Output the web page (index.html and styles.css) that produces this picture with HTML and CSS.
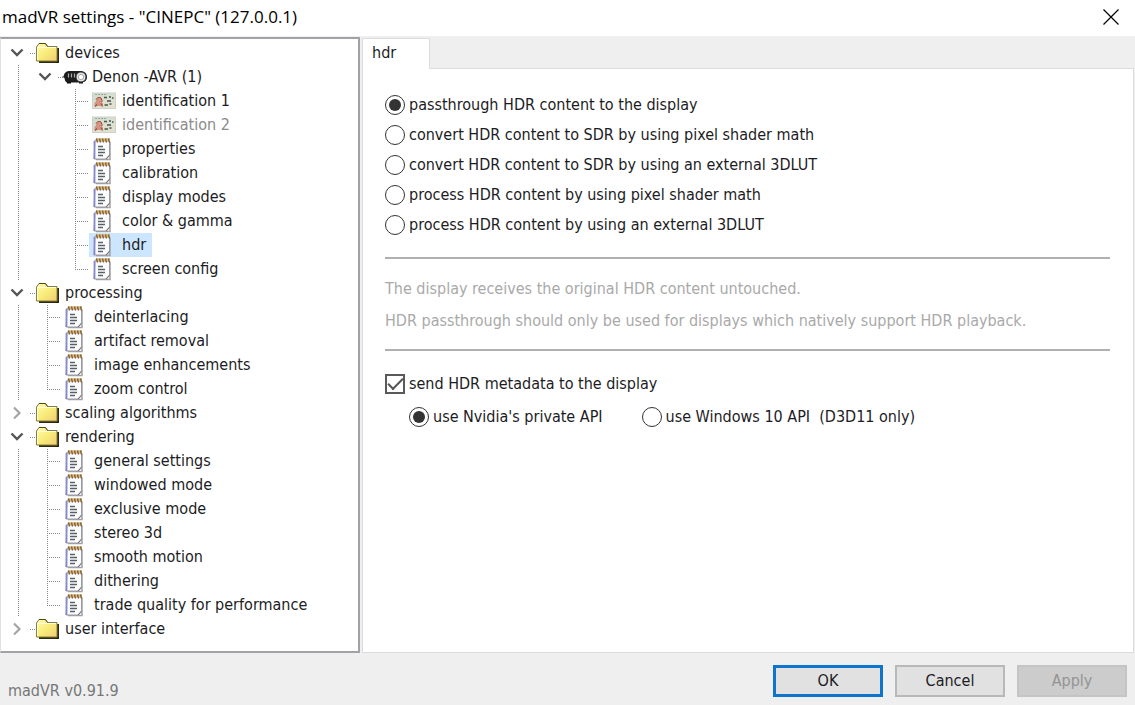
FILE: index.html
```html
<!DOCTYPE html>
<html lang="en">
<head>
<meta charset="utf-8">
<title>madVR settings</title>
<link rel="stylesheet" href="styles.css">
</head>
<body>
<svg class="sprite" aria-hidden="true">
  <defs>
    <linearGradient id="fold" x1="0" y1="0" x2="1" y2="1">
      <stop offset="0" stop-color="#fffbb0"/><stop offset=".5" stop-color="#f8ec7a"/><stop offset="1" stop-color="#f3cd74"/>
    </linearGradient>
    <linearGradient id="card" x1="0" y1="0" x2="1" y2="1">
      <stop offset="0" stop-color="#cfdcd0"/><stop offset="1" stop-color="#e3e2cf"/>
    </linearGradient>
  </defs>
  <symbol id="folder" viewBox="-1 -1 24 22">
    <path d="M3 19h19V5" fill="none" stroke="#2a2910" stroke-width="2"/>
    <path d="M.5 18V4L3 .5h6.500l2 3h9.500V18z" fill="url(#fold)" stroke="#85803a"/>
    <path d="M3 .5h6.500l2 3" fill="none" stroke="#4c4a1c"/>
    <path d="M1.500 17V4.500h18.500" fill="none" stroke="#fffde0"/>
  </symbol>
  <symbol id="page" viewBox="1 0 24 24">
    <path d="M5 22.500h14V4.500" fill="none" stroke="#a2a2a2" stroke-width="1.500"/>
    <path d="M4 3h14.500v15.500l-3 3.500H3z" fill="#fcfcfe" stroke="#9a9aa4"/>
    <path d="M3.500 4v18" stroke="#8488cc" stroke-width="1.800"/>
    <path d="M15 22l3.500-4" stroke="#666"/>
    <path d="M5 3h14" stroke="#d8b87e" stroke-width="3.500"/>
    <path d="M5.500 1.500l1 4M8.500 1.500l1 4M11.500 1.500l1 4M14.500 1.500l1 4M17.500 1.500l1 4" stroke="#775a36" stroke-width="1.200"/>
    <path d="M7 9.500h5M7 12.500h7M7 15.500h7M7 18.500h5" stroke="#56646a" stroke-width="1.300"/>
  </symbol>
  <symbol id="ident" viewBox="0 0 24 18">
    <rect x=".5" y="1" width="23" height="15.500" fill="url(#card)" stroke="#cdd2c9"/>
    <path d="M3 2.500h12" stroke="#9aa79f" stroke-dasharray="2 1"/>
    <path d="M2.500 14v-3l1.500-1.500V6.500l2-1.500h2l2 1.500v4l1 1.500v2z" fill="#d39580"/>
    <path d="M4 7.500l2-2h2.500l1.500 2.500v2" fill="none" stroke="#995642"/>
    <path d="M3 14.500l2-2M9 11.500l1.500 3" stroke="#a84c40" stroke-width="1.200"/>
    <path d="M12 5.500h3M17 5h2M20 6h1.500M15 9h4M12.500 13h3.500M17.500 12h2" stroke="#4a544f" stroke-width="1.500"/>
  </symbol>
  <symbol id="projector" viewBox="0 0 26 16">
    <path d="M0 7.500h1.500l1-3q1.500-2.500 4-2.500h13q5.500 1 5.500 6t-5.500 5.500H5q-2-.5-2.500-4.500z" fill="#1c1c1c"/>
    <path d="M5 13h4v1.500H5zM17 13h4v1.500h-4z" fill="#111"/>
    <path d="M6.500 4.500v4M9.500 4.500v4M12.500 4.500v4" stroke="#aaa" stroke-width="1.200"/>
    <circle cx="19" cy="8" r="5" fill="#e6e6e6" stroke="#333"/>
    <circle cx="19" cy="8" r="2.700" fill="#fff" stroke="#aaa"/>
  </symbol>
  <symbol id="open" viewBox="0 0 14 10">
    <path d="M1.500 1.500L7 7l5.500-5.500" fill="none" stroke="#555" stroke-width="2.400"/>
  </symbol>
  <symbol id="closed" viewBox="0 0 10 14">
    <path d="M2 1.500L7.500 7 2 12.500" fill="none" stroke="#a5a5a5" stroke-width="2.200"/>
  </symbol>
</svg>

<header class="titlebar">
  <h1 class="title">madVR settings - "CINEPC" (127.0.0.1)</h1>
  <button class="close" type="button" aria-label="Close">
    <svg width="16" height="16" viewBox="0 0 16 16"><path d="M.5.5l15 15M15.500.5l-15 15" stroke="#000" stroke-width="1.200"/></svg>
  </button>
</header>

<main class="main">
  <nav class="tree" aria-label="Settings">
    <ul class="list">
      <li>
        <div class="row"><button class="toggle" type="button" aria-label="Collapse devices"><svg width="14" height="10"><use href="#open"/></svg></button><span class="stub"></span><span class="item"><svg class="icon" width="24" height="22"><use href="#folder"/></svg><span>devices</span></span></div>
        <ul class="list sub guide">
          <li>
            <div class="row"><button class="toggle" type="button" aria-label="Collapse Denon"><svg width="14" height="10"><use href="#open"/></svg></button><span class="stub"></span><span class="item device"><svg class="icon" width="26" height="16"><use href="#projector"/></svg><span>Denon -AVR (1)</span></span></div>
            <ul class="list sub">
              <li class="row leaf"><span class="branch"></span><span class="item"><svg class="icon" width="24" height="18"><use href="#ident"/></svg><span>identification 1</span></span></li>
              <li class="row leaf"><span class="branch"></span><span class="item off"><svg class="icon" width="24" height="18"><use href="#ident"/></svg><span>identification 2</span></span></li>
              <li class="row leaf"><span class="branch"></span><span class="item"><svg class="icon" width="24" height="24"><use href="#page"/></svg><span>properties</span></span></li>
              <li class="row leaf"><span class="branch"></span><span class="item"><svg class="icon" width="24" height="24"><use href="#page"/></svg><span>calibration</span></span></li>
              <li class="row leaf"><span class="branch"></span><span class="item"><svg class="icon" width="24" height="24"><use href="#page"/></svg><span>display modes</span></span></li>
              <li class="row leaf"><span class="branch"></span><span class="item"><svg class="icon" width="24" height="24"><use href="#page"/></svg><span>color &amp; gamma</span></span></li>
              <li class="row leaf"><span class="branch"></span><span class="item selected"><svg class="icon" width="24" height="24"><use href="#page"/></svg><span>hdr</span></span></li>
              <li class="row leaf"><span class="branch"></span><span class="item"><svg class="icon" width="24" height="24"><use href="#page"/></svg><span>screen config</span></span></li>
            </ul>
          </li>
        </ul>
      </li>
      <li>
        <div class="row"><button class="toggle" type="button" aria-label="Collapse processing"><svg width="14" height="10"><use href="#open"/></svg></button><span class="stub"></span><span class="item"><svg class="icon" width="24" height="22"><use href="#folder"/></svg><span>processing</span></span></div>
        <ul class="list sub guide">
          <li class="row leaf"><span class="branch"></span><span class="item"><svg class="icon" width="24" height="24"><use href="#page"/></svg><span>deinterlacing</span></span></li>
          <li class="row leaf"><span class="branch"></span><span class="item"><svg class="icon" width="24" height="24"><use href="#page"/></svg><span>artifact removal</span></span></li>
          <li class="row leaf"><span class="branch"></span><span class="item"><svg class="icon" width="24" height="24"><use href="#page"/></svg><span>image enhancements</span></span></li>
          <li class="row leaf"><span class="branch"></span><span class="item"><svg class="icon" width="24" height="24"><use href="#page"/></svg><span>zoom control</span></span></li>
        </ul>
      </li>
      <li>
        <div class="row"><button class="toggle" type="button" aria-label="Expand scaling algorithms"><svg width="10" height="14"><use href="#closed"/></svg></button><span class="stub"></span><span class="item"><svg class="icon" width="24" height="22"><use href="#folder"/></svg><span>scaling algorithms</span></span></div>
      </li>
      <li>
        <div class="row"><button class="toggle" type="button" aria-label="Collapse rendering"><svg width="14" height="10"><use href="#open"/></svg></button><span class="stub"></span><span class="item"><svg class="icon" width="24" height="22"><use href="#folder"/></svg><span>rendering</span></span></div>
        <ul class="list sub guide">
          <li class="row leaf"><span class="branch"></span><span class="item"><svg class="icon" width="24" height="24"><use href="#page"/></svg><span>general settings</span></span></li>
          <li class="row leaf"><span class="branch"></span><span class="item"><svg class="icon" width="24" height="24"><use href="#page"/></svg><span>windowed mode</span></span></li>
          <li class="row leaf"><span class="branch"></span><span class="item"><svg class="icon" width="24" height="24"><use href="#page"/></svg><span>exclusive mode</span></span></li>
          <li class="row leaf"><span class="branch"></span><span class="item"><svg class="icon" width="24" height="24"><use href="#page"/></svg><span>stereo 3d</span></span></li>
          <li class="row leaf"><span class="branch"></span><span class="item"><svg class="icon" width="24" height="24"><use href="#page"/></svg><span>smooth motion</span></span></li>
          <li class="row leaf"><span class="branch"></span><span class="item"><svg class="icon" width="24" height="24"><use href="#page"/></svg><span>dithering</span></span></li>
          <li class="row leaf"><span class="branch"></span><span class="item"><svg class="icon" width="24" height="24"><use href="#page"/></svg><span>trade quality for performance</span></span></li>
        </ul>
      </li>
      <li>
        <div class="row"><button class="toggle" type="button" aria-label="Expand user interface"><svg width="10" height="14"><use href="#closed"/></svg></button><span class="stub"></span><span class="item"><svg class="icon" width="24" height="22"><use href="#folder"/></svg><span>user interface</span></span></div>
      </li>
    </ul>
  </nav>

  <section class="pane">
    <div class="tabs" role="tablist"><button class="tab" type="button" role="tab" aria-selected="true">hdr</button></div>
    <form class="panel" id="hdr-form">
      <div class="modes">
        <label class="choice"><input type="radio" name="mode" checked>passthrough HDR content to the display</label>
        <label class="choice"><input type="radio" name="mode">convert HDR content to SDR by using pixel shader math</label>
        <label class="choice"><input type="radio" name="mode">convert HDR content to SDR by using an external 3DLUT</label>
        <label class="choice"><input type="radio" name="mode">process HDR content by using pixel shader math</label>
        <label class="choice"><input type="radio" name="mode">process HDR content by using an external 3DLUT</label>
      </div>
      <div class="notes">
        <p>The display receives the original HDR content untouched.</p>
        <p>HDR passthrough should only be used for displays which natively support HDR playback.</p>
      </div>
      <label class="choice"><input type="checkbox" checked>send HDR metadata to the display</label>
      <div class="apis">
        <label class="choice"><input type="radio" name="api" checked>use Nvidia's private API</label>
        <label class="choice"><input type="radio" name="api">use Windows 10 API &nbsp;(D3D11 only)</label>
      </div>
    </form>
  </section>
</main>

<footer class="footer">
  <span class="version">madVR v0.91.9</span>
  <div class="buttons">
    <button class="button primary" type="submit" form="hdr-form">OK</button>
    <button class="button" type="button">Cancel</button>
    <button class="button" type="button" disabled>Apply</button>
  </div>
</footer>
</body>
</html>
```

FILE: styles.css
```css
* { box-sizing: border-box; }

body {
  margin: 0;
  min-height: 100vh;
  display: flex;
  flex-direction: column;
  background: #efefef;
  color: #1c1c24;
  font: 16px/24px "DejaVu Sans Condensed", "DejaVu Sans", sans-serif;
}

button {
  font: inherit;
  color: inherit;
  border: 0;
  padding: 0;
  background: none;
}

.sprite { position: absolute; width: 0; height: 0; }

.titlebar {
  display: flex;
  align-items: center;
  justify-content: space-between;
  height: 36px;
  padding: 0 16px 2px 2px;
  background: #fff;
}

.title {
  margin: 0;
  color: #000;
  font: 17px/24px "Open Sans", "Noto Sans", sans-serif;
}

.close { display: flex; }

.main {
  flex: 1;
  display: flex;
  padding: 1px 1px 0 0;
}

.tree {
  width: 360px;
  flex: none;
  padding: 2px 0 10px;
  background: #fff;
  border: 2px solid #a0a2a8;
  border-left: 1px solid #e0e0e0;
}

.list {
  list-style: none;
  margin: 0;
  padding: 0;
}

.sub { padding-left: 28px; }

.guide {
  background: repeating-linear-gradient(#888 0 1px, transparent 1px 2px) 17px 0 / 1px 100% no-repeat;
}

.row {
  display: flex;
  align-items: center;
  height: 24px;
}

.toggle {
  display: flex;
  justify-content: center;
  width: 16px;
  margin-left: 8px;
}

.stub {
  width: 6px;
  height: 1px;
  margin-left: 5px;
  margin-right: -4px;
  background: repeating-linear-gradient(90deg, #888 0 1px, transparent 1px 2px);
}

.item {
  display: flex;
  align-items: center;
  height: 24px;
  padding: 0 6px 0 3px;
  gap: 6px;
  white-space: nowrap;
}

.device {
  padding-left: 2px;
  gap: 4px;
}

.icon { flex: none; }

.branch {
  width: 14px;
  height: 24px;
  margin-left: 18px;
  background:
    repeating-linear-gradient(#888 0 1px, transparent 1px 2px) 0 0 / 1px 100% no-repeat,
    repeating-linear-gradient(90deg, #888 0 1px, transparent 1px 2px) 0 12px / 100% 1px no-repeat;
}

.leaf:last-child .branch { background-size: 1px 12px, 100% 1px; }

.off { color: #8a8a8a; }

.selected { background: #cde6ff; }

.pane {
  flex: 1;
  display: flex;
  flex-direction: column;
  padding: 1px 0 0 2px;
}

.tabs { display: flex; }

.tab {
  height: 31px;
  padding: 0 33px 2px 9px;
  margin-bottom: -1px;
  position: relative;
  background: #fff;
  border: 1px solid #dcdcdc;
  border-bottom: 0;
}

.panel {
  flex: 1;
  padding: 21px 23px 20px 22px;
  background: #fff;
  border: 1px solid #dcdcdc;
}

.choice {
  display: flex;
  align-items: center;
  gap: 4px;
  height: 30px;
}

.choice input {
  appearance: none;
  flex: none;
  display: grid;
  place-items: center;
  width: 20px;
  height: 20px;
  margin: 0;
  background: #fff;
  border: 2px solid #5a5a5a;
}

.choice input[type="radio"] {
  border-width: 1px;
  border-color: #333;
  border-radius: 50%;
}

.choice input[type="radio"]:checked::before {
  content: "";
  width: 12px;
  height: 12px;
  border-radius: 50%;
  background: #333;
}

.choice input[type="checkbox"]:checked::before {
  content: "";
  width: 13px;
  height: 6px;
  margin-bottom: 4px;
  border: solid #555;
  border-width: 0 0 2px 2px;
  transform: rotate(-45deg);
}

.notes {
  margin: 17px 0 18px;
  padding: 18px 0 16px;
  border: solid #b0b0b0;
  border-width: 2px 0;
  color: #a9a9a9;
}

.notes p { margin: 0 0 8px; }
.notes p:last-child { margin: 0; }

.apis {
  display: flex;
  gap: 39px;
  padding: 3px 0 0 24px;
}

.footer {
  display: flex;
  justify-content: space-between;
  padding: 12px 8px 9px;
}

.version {
  align-self: flex-end;
  margin-bottom: -6px;
  color: #777;
}

.buttons { display: flex; gap: 12px; }

.button {
  width: 110px;
  height: 32px;
  background: #e1e1e1;
  border: 2px solid #b8b8b8;
}

.primary { border: 3px solid #0f75cc; }

.button:disabled {
  color: #949494;
  background: #cccccc;
  border-color: #c4c4c4;
}
```
